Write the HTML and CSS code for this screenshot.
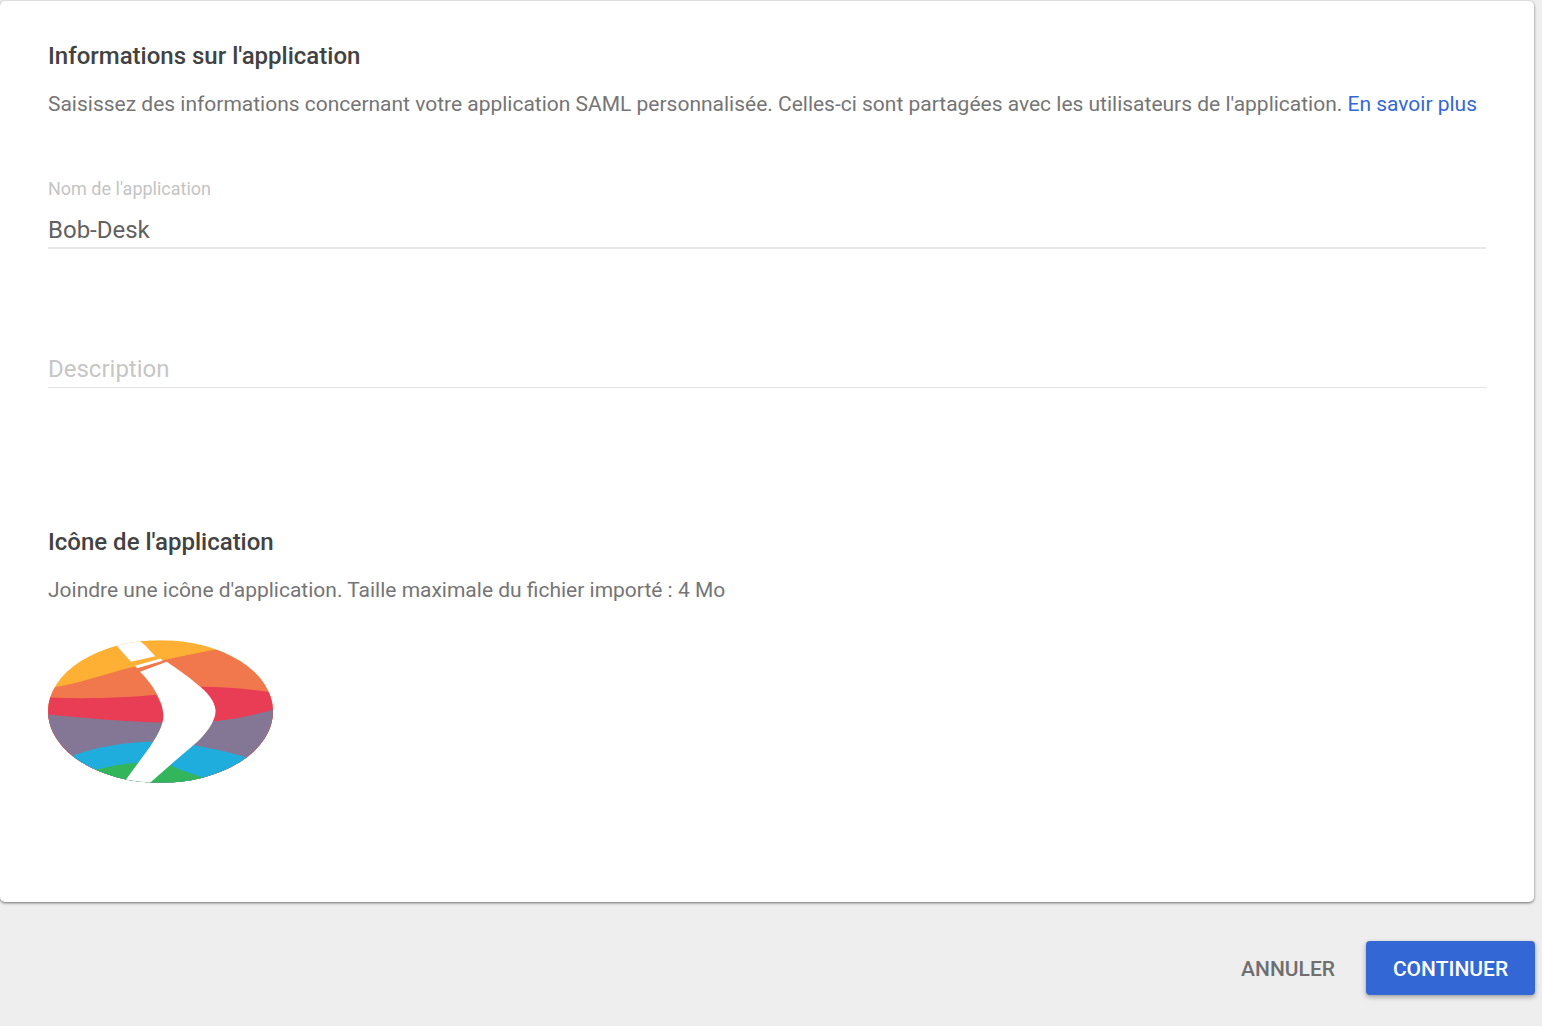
FILE: index.html
```html
<!DOCTYPE html>
<html lang="fr">
<head>
<meta charset="utf-8">
<title>Informations sur l'application</title>
<link rel="stylesheet" href="styles.css">
</head>
<body>
<main class="card">
  <h2 class="title">Informations sur l'application</h2>
  <p class="text">Saisissez des informations concernant votre application SAML personnalisée. Celles-ci sont partagées avec les utilisateurs de l'application. <a class="link" href="#">En savoir plus</a></p>
  <div class="field field-name">
    <div class="label">Nom de l'application</div>
    <div class="value">Bob-Desk</div>
  </div>
  <div class="field field-desc">
    <div class="value placeholder">Description</div>
  </div>
  <h2 class="title title-icon">Icône de l'application</h2>
  <p class="text">Joindre une icône d'application. Taille maximale du fichier importé : 4 Mo</p>
  <svg class="logo" viewBox="54 45 675 428" width="225" height="143" aria-label="Icône">
    <defs><clipPath id="oval"><ellipse cx="391.5" cy="259" rx="337.5" ry="214"/></clipPath></defs>
    <g clip-path="url(#oval)">
      <rect x="54" y="45" width="675" height="428" fill="#fdb033"/>
      <path d="M54 190 C150 175 230 145 300 128 C380 108 470 90 560 72 L729 72 L729 473 L54 473Z" fill="#f0784c"/>
      <path d="M54 217 C170 222 290 218 378 209 L400 250 L555 250 L510 185 C590 186 660 192 729 202 L729 473 L54 473Z" fill="#e83d55"/>
      <path d="M54 268 C170 280 290 290 400 292 L555 288 C620 280 680 268 729 254 L729 473 L54 473Z" fill="#847795"/>
      <path d="M128 392 C200 365 290 350 372 350 L490 360 C550 370 600 382 648 396 L648 473 L128 473Z" fill="#1fadde"/>
      <path d="M195 434 C240 422 285 415 326 412 L420 420 C450 435 490 447 522 458 L522 473 L195 473Z" fill="#33b65b"/>
      <path d="M260 62 L303 110 L376 93 L345 60 L320 40 L250 40Z" fill="#fff"/>
      <path d="M315 122 L392 100 L398 107 L322 129Z" fill="#fff"/>
      <path d="M330 140 C365 175 398 225 400 268 C402 300 380 335 360 365 L288 463 L300 480 L352 480 L420 420 L490 360 C520 335 555 295 557 258 C555 225 530 200 505 180 C475 155 440 130 410 110 Z" fill="#fff"/>
    </g>
  </svg>
</main>
<footer class="actions">
  <button class="btn btn-text">ANNULER</button>
  <button class="btn btn-primary">CONTINUER</button>
</footer>
</body>
</html>
```
FILE: styles.css
```css
html, body {
  margin: 0;
  height: 100%;
}
body {
  background: #eeeeee;
  font-family: Roboto, "Liberation Sans", sans-serif;
  overflow: hidden;
  padding-top: 1px;
  box-sizing: border-box;
}
.card {
  box-sizing: border-box;
  width: 1534px;
  height: 901px;
  background: #fff;
  border-radius: 5px;
  box-shadow: 0 1px 3px rgba(0,0,0,.55);
  padding: 38px 48px 0;
}
.title {
  margin: 0;
  font-size: 24px;
  line-height: 34px;
  font-weight: 500;
  color: #424242;
}
.text {
  margin: 14px 0 0;
  font-size: 20.99px;
  line-height: 34px;
  color: #757575;
  white-space: nowrap;
}
.link {
  color: #3367d6;
  text-decoration: none;
}
.field {
  width: 1438px;
  border-bottom: 1px solid #e3e3e3;
}
.field-name {
  margin-top: 56px;
  border-bottom-width: 2px;
  border-bottom-color: #e8e8e8;
}
.field-desc {
  margin-top: 104px;
  width: 1439px;
}
.label {
  font-size: 18px;
  line-height: 24px;
  color: #c4c4c4;
}
.value {
  margin-top: 12px;
  font-size: 24px;
  line-height: 34px;
  color: #616161;
}
.placeholder {
  color: #c6c6c6;
  margin-top: 0;
  line-height: 32px;
  padding-bottom: 2px;
}
.title-icon {
  margin-top: 137px;
}
.logo {
  display: block;
  margin-top: 33px;
}
.actions {
  display: flex;
  justify-content: flex-end;
  align-items: center;
  width: 1535px;
  margin-top: 39px;
}
.btn {
  font-family: inherit;
  font-size: 21px;
  font-weight: 500;
  height: 54px;
  border: 0;
  border-radius: 4px;
  background: transparent;
  cursor: pointer;
  padding: 2px 0 0;
}
.btn-text {
  color: #6f6f6f;
  padding-right: 31px;
}
.btn-primary {
  width: 169px;
  background: #3367d6;
  color: #fff;
  box-shadow: 0 2px 5px rgba(0,0,0,.35);
}
```
